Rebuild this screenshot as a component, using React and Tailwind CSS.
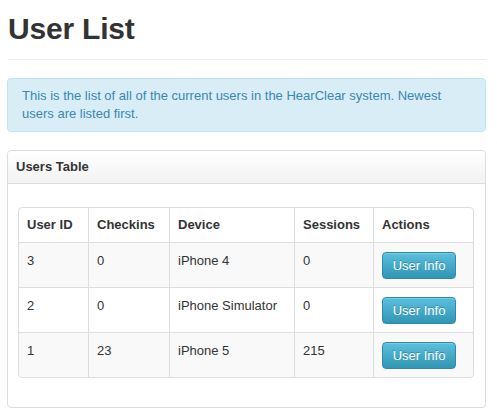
import React from "react";

const rows = [
  { id: "3", checkins: "0", device: "iPhone 4", sessions: "0" },
  { id: "2", checkins: "0", device: "iPhone Simulator", sessions: "0" },
  { id: "1", checkins: "23", device: "iPhone 5", sessions: "215" },
];

export default function App() {
  return (
    <div
      className="w-[497px] h-[419px] bg-white text-[#333] overflow-hidden"
      style={{ fontFamily: '"Liberation Sans", Arial, sans-serif' }}
    >
      <div className="pl-[7px] pr-[11px]">
        <div className="pt-[10px] pb-[11px] border-b border-[#eeeeee] ml-[1px] mb-[18px]">
          <h1 className="text-[30px] font-bold leading-[38px] tracking-[-0.2px] text-[#333]">User List</h1>
        </div>
        <div className="bg-[#d9edf7] border border-[#bce8f1] rounded-[4px] pt-[8px] pb-[8px] pl-[14px] pr-[30px] text-[13px] leading-[18px] text-[#3a87ad]">
          This is the list of all of the current users in the HearClear system. Newest users are listed first.
        </div>
        <div className="mt-[18px] border border-[#dddddd] rounded-[4px] w-[479px]">
          <div className="h-[33px] flex items-center px-[8px] border-b border-[#dddddd] rounded-t-[4px] bg-gradient-to-b from-[#ffffff] to-[#f2f2f2] text-[13px] font-bold text-[#333]">
            Users Table
          </div>
          <div className="pt-[23px] pb-[29px] pl-[10px] pr-[10px]">
            <table className="table-fixed border-separate border-spacing-0 w-[456px] border border-[#dddddd] rounded-[4px] text-[13px] leading-[18px] text-[#333]">
              <colgroup>
                <col className="w-[69px]" />
                <col className="w-[81px]" />
                <col className="w-[125px]" />
                <col className="w-[79px]" />
                <col className="w-[100px]" />
              </colgroup>
              <thead>
                <tr>
                  {["User ID", "Checkins", "Device", "Sessions", "Actions"].map((h, i) => (
                    <th
                      key={h}
                      className={
                        "h-[34px] px-[8px] text-left font-bold align-middle " +
                        (i > 0 ? "border-l border-[#dddddd]" : "")
                      }
                    >
                      {h}
                    </th>
                  ))}
                </tr>
              </thead>
              <tbody>
                {rows.map((r, ri) => {
                  const bg = ri % 2 === 0 ? "bg-[#f9f9f9]" : "bg-white";
                  const last = ri === rows.length - 1;
                  const cell = "border-t border-[#dddddd] px-[8px] pt-[9px] align-top " + bg;
                  return (
                    <tr key={r.id} className="h-[45px]">
                      <td className={cell + (last ? " rounded-bl-[4px]" : "")}>{r.id}</td>
                      <td className={cell + " border-l"}>{r.checkins}</td>
                      <td className={cell + " border-l"}>{r.device}</td>
                      <td className={cell + " border-l"}>{r.sessions}</td>
                      <td className={cell + " border-l pb-[8px]" + (last ? " rounded-br-[4px]" : "")}>
                        <button className="w-[74px] h-[27px] rounded-[4px] border border-[#2d8aa8] bg-gradient-to-b from-[#5bc0de] to-[#2f96b4] text-white text-[13px] leading-[18px] [text-shadow:0_-1px_0_rgba(0,0,0,0.25)] shadow-[inset_0_1px_0_rgba(255,255,255,0.2)]">
                          User Info
                        </button>
                      </td>
                    </tr>
                  );
                })}
              </tbody>
            </table>
          </div>
        </div>
      </div>
    </div>
  );
}
